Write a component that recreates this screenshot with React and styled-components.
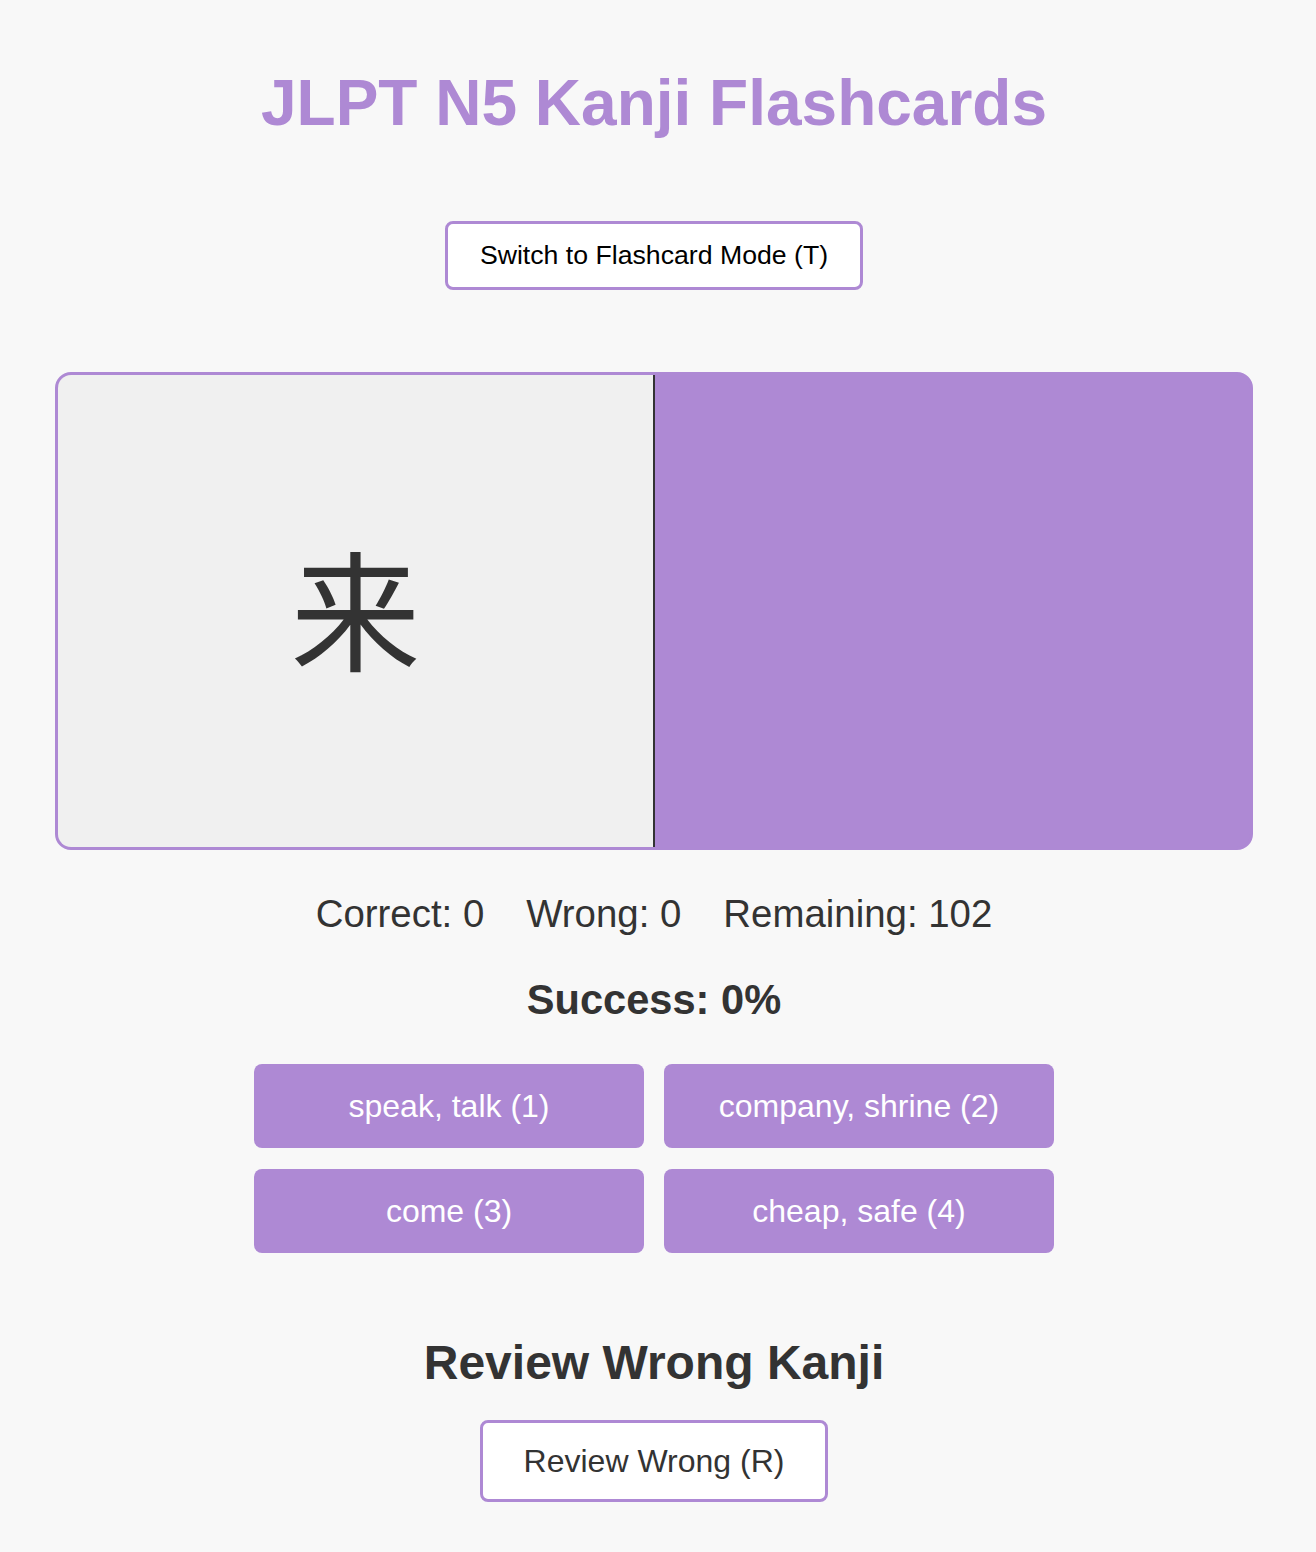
import React, { useState } from 'react';
import styled, { createGlobalStyle } from 'styled-components';

const purple = '#ae89d4';

const GlobalStyle = createGlobalStyle`
  body {
    margin: 0;
    background-color: #f8f8f8;
    font-family: "Liberation Sans", Arial, Helvetica, sans-serif;
    color: #333;
  }
`;

const choices = [
  { label: 'speak, talk', key: 1 },
  { label: 'company, shrine', key: 2 },
  { label: 'come', key: 3 },
  { label: 'cheap, safe', key: 4 },
];

function App() {
  const [flashMode, setFlashMode] = useState(false);
  const [stats, setStats] = useState({ correct: 0, wrong: 0, remaining: 102 });

  const total = stats.correct + stats.wrong;
  const success = total ? Math.round((stats.correct / total) * 100) : 0;

  const handleChoice = (key) => {
    const ok = key === 3;
    setStats((s) => ({
      correct: s.correct + (ok ? 1 : 0),
      wrong: s.wrong + (ok ? 0 : 1),
      remaining: s.remaining,
    }));
  };

  return (
    <Page>
      <GlobalStyle />
      <Title>JLPT N5 Kanji Flashcards</Title>

      <OutlineButton $dark onClick={() => setFlashMode(!flashMode)}>
        Switch to {flashMode ? 'Quiz' : 'Flashcard'} Mode (T)
      </OutlineButton>

      <Card>
        <Face $front>
          <Kanji lang="ja">来</Kanji>
        </Face>
        <Face />
      </Card>

      <Stats>
        <span>Correct: {stats.correct}</span>
        <span>Wrong: {stats.wrong}</span>
        <span>Remaining: {stats.remaining}</span>
      </Stats>

      <Success>Success: {success}%</Success>

      <Choices>
        {choices.map((c) => (
          <ChoiceButton key={c.key} onClick={() => handleChoice(c.key)}>
            {c.label} ({c.key})
          </ChoiceButton>
        ))}
      </Choices>

      <ReviewTitle>Review Wrong Kanji</ReviewTitle>
      <ReviewButton>Review Wrong (R)</ReviewButton>
    </Page>
  );
}

const Page = styled.div`
  display: flex;
  flex-direction: column;
  align-items: center;
  padding: 66px 20px 50px 12px;
`;

const Title = styled.h1`
  margin: 0;
  font-size: 64px;
  font-weight: bold;
  line-height: 74px;
  color: ${purple};
`;

const OutlineButton = styled.button`
  margin-top: 81px;
  padding: 16px 32px;
  background: #fff;
  border: 3px solid ${purple};
  border-radius: 8px;
  font-family: inherit;
  font-size: 26.67px;
  line-height: 31px;
  color: ${(p) => (p.$dark ? '#000' : '#333')};
  cursor: pointer;
`;

const Card = styled.div`
  margin-top: 82px;
  width: 1198px;
  height: 478px;
  box-sizing: border-box;
  display: flex;
  border: 3px solid ${purple};
  border-radius: 16px;
  overflow: hidden;
  background: ${purple};
`;

const Face = styled.div`
  flex: 1;
  box-sizing: border-box;
  display: flex;
  align-items: center;
  justify-content: center;
  background: ${(p) => (p.$front ? '#f0f0f0' : purple)};
  border-right: ${(p) => (p.$front ? '2px solid #333' : 'none')};
`;

const Kanji = styled.span`
  padding-bottom: 14px;
  font-family: "Noto Sans CJK JP", "Noto Sans CJK SC", sans-serif;
  font-size: 130px;
  line-height: 1;
  color: #333;
`;

const Stats = styled.div`
  margin-top: 42px;
  display: flex;
  gap: 42px;
  font-size: 38.4px;
  line-height: 44px;
  color: #333;
`;

const Success = styled.div`
  margin-top: 40px;
  font-size: 41.6px;
  font-weight: bold;
  line-height: 48px;
  color: #333;
`;

const Choices = styled.div`
  margin-top: 40px;
  display: grid;
  grid-template-columns: repeat(2, 390px);
  column-gap: 20px;
  row-gap: 21px;
`;

const ChoiceButton = styled.button`
  height: 84px;
  border: none;
  border-radius: 8px;
  background: ${purple};
  color: #fff;
  font-family: inherit;
  font-size: 32px;
  cursor: pointer;

  &:hover {
    opacity: 0.9;
  }
`;

const ReviewTitle = styled.h2`
  margin: 82px 0 0;
  font-size: 48px;
  font-weight: bold;
  line-height: 55px;
  color: #333;
`;

const ReviewButton = styled(OutlineButton)`
  margin-top: 30px;
  padding: 20px 41px;
  font-size: 32px;
  line-height: 36px;
`;

export default App;
